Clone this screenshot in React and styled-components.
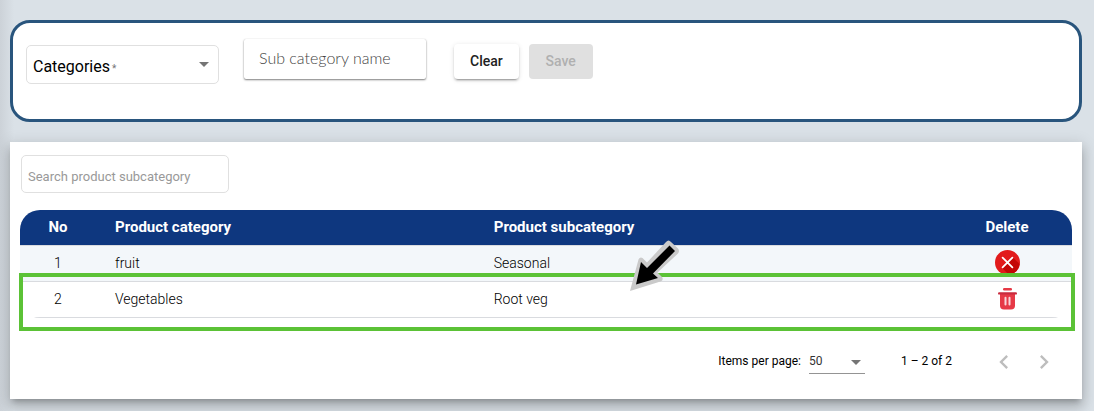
import React from "react";
import styled, { createGlobalStyle } from "styled-components";

const GlobalStyle = createGlobalStyle`
  *, *::before, *::after { box-sizing: border-box; }
  body {
    margin: 0;
    min-height: 100vh;
    background: linear-gradient(90deg, #ccd2d8, #dae1e7 14px) #dae1e7;
    font-family: Roboto, "Liberation Sans", sans-serif;
    color: #000;
  }
  button, input, select { font: inherit; }
`;

const Page = styled.main`
  display: flex;
  flex-direction: column;
  gap: 20px;
  padding: 20px 12px 12px 10px;
`;

const FormPanel = styled.form`
  display: flex;
  align-items: flex-start;
  padding: 16px 13px 35px;
  border: 3px solid #29557d;
  border-radius: 20px;
  background: #fff;
`;

const CategoryField = styled.div`
  display: grid;
  align-items: center;
  width: 193px;
  height: 39px;
  margin: 6px 25px 0 0;
  border: 1px solid #e0e0e0;
  border-radius: 5px;

  > * { grid-area: 1 / 1; }
`;

const CategoryLabel = styled.label`
  padding: 6px 0 0 6px;
  font-size: 16px;
  line-height: 20px;
  pointer-events: none;
  z-index: 1;

  small { margin-left: -2px; font-size: 10px; color: #757575; }
`;

const CategorySelect = styled.select`
  width: 100%;
  height: 100%;
  border: 0;
  background: transparent;
  appearance: none;
`;

const Arrow = styled.svg`
  width: 10px;
  height: 5px;
  margin-right: ${(p) => p.$inset};
  justify-self: end;
  fill: #757575;
  pointer-events: none;
`;

const NameInput = styled.input`
  width: 182px;
  height: 40px;
  padding: 0 15px 3px;
  border: 0;
  border-radius: 2px;
  background: #fff;
  box-shadow: 0 1px 2px rgba(0, 0, 0, 0.5), 0 0 1px rgba(0, 0, 0, 0.15);
  font-family: Lato, sans-serif;
  font-weight: 300;
  font-size: 16px;

  &::placeholder { color: #444; opacity: 1; }
`;

const Actions = styled.div`
  display: flex;
  gap: 10px;
  margin: 5px 0 0 28px;
`;

const Button = styled.button`
  min-width: 64px;
  height: 35px;
  padding: 0 16px 1px;
  border: 0;
  border-radius: 4px;
  background: #fff;
  color: #212121;
  font-size: 14px;
  font-weight: 500;
  box-shadow: 0 3px 1px -2px rgba(0, 0, 0, 0.2), 0 2px 2px rgba(0, 0, 0, 0.14),
    0 1px 5px rgba(0, 0, 0, 0.12);

  &:disabled {
    background: #e0e0e0;
    color: #b0b0b0;
    box-shadow: none;
  }
`;

const Card = styled.section`
  padding: 13px 10px 23px;
  background: #fff;
  box-shadow: 0 5px 5px -3px rgba(0, 0, 0, 0.2), 0 8px 10px 1px rgba(0, 0, 0, 0.14),
    0 3px 14px 2px rgba(0, 0, 0, 0.12);
`;

const SearchInput = styled.input`
  display: block;
  width: 208px;
  height: 38px;
  margin: 0 0 17px 1px;
  padding: 5px 6px 0;
  border: 1px solid #e0e0e0;
  border-radius: 5px;
  font-size: 13px;

  &::placeholder { color: #999; opacity: 1; }
`;

const TableArea = styled.div`
  position: relative;
`;

const TableClip = styled.div`
  overflow: hidden;
  border-radius: 20px;
`;

const Table = styled.table`
  width: 100%;
  table-layout: fixed;
  border-collapse: separate;
  border-spacing: 0;
`;

const HeadCell = styled.th`
  width: ${(p) => p.$width};
  height: 36px;
  padding: ${(p) => (p.$center ? "0 0 2px" : "0 0 2px 19px")};
  border-bottom: 1px solid #d9dbdf;
  background: #0e377f;
  color: #fff;
  font-size: 15px;
  font-weight: 700;
  line-height: 20px;
  text-align: ${(p) => (p.$center ? "center" : "left")};
`;

const Row = styled.tr`
  background: ${(p) => (p.$shaded ? "#f3f7fa" : "transparent")};
`;

const Cell = styled.td`
  height: 36px;
  padding: ${(p) => (p.$center ? "0 0 2px" : "0 0 2px 19px")};
  border-bottom: 1px solid #d9dbdf;
  font-weight: 300;
  font-size: 14px;
  line-height: 20px;
  text-align: ${(p) => (p.$center ? "center" : "left")};
`;

const IconButton = styled.button`
  display: inline-flex;
  padding: 0;
  border: 0;
  background: none;
  vertical-align: middle;
`;

const Highlight = styled.div`
  position: absolute;
  top: 63px;
  left: -1px;
  right: -3px;
  height: 58px;
  border: 4px solid #5bc236;
  pointer-events: none;
`;

const Pointer = styled.svg`
  position: absolute;
  top: 29px;
  left: 58%;
  width: 52px;
  height: 54px;
  margin-left: -1px;
  pointer-events: none;
`;

const Paginator = styled.nav`
  display: flex;
  align-items: center;
  justify-content: flex-end;
  margin-top: 28px;
  padding-right: 14px;
  font-size: 12px;
  line-height: 16px;
`;

const PageSize = styled.div`
  display: grid;
  align-items: center;
  width: 56px;
  height: 26px;
  margin: 0 36px 0 8px;
  border-bottom: 1px solid #949494;

  > * { grid-area: 1 / 1; }

  svg { margin-top: 4px; }

  select {
    width: 100%;
    padding: 0;
    border: 0;
    background: transparent;
    color: #333;
    appearance: none;
  }
`;

const PageButtons = styled.div`
  display: flex;
  gap: 12px;
  margin: 2px 0 0 38px;
`;

const DownArrow = ({ inset }) => (
  <Arrow viewBox="0 0 10 5" $inset={inset} aria-hidden="true">
    <path d="M0 0h10L5 5z" />
  </Arrow>
);

const CrossIcon = () => (
  <svg width="25" height="25" viewBox="0 0 25 25" aria-hidden="true">
    <circle cx="12.5" cy="12.5" r="12.5" fill="#e21b1b" />
    <path d="M18 7.5l6.6 6.6A12.5 12.5 0 0 1 14.2 24.9L7.2 18z" fill="#c40606" />
    <path d="M7.6 7.6l9.8 9.8M17.4 7.6l-9.8 9.8" stroke="#fff" strokeWidth="1.8" strokeLinecap="round" />
  </svg>
);

const TrashIcon = () => (
  <svg width="19" height="22" viewBox="0 0 19 22" aria-hidden="true">
    <rect x="5" y="0" width="9" height="2.4" rx="1.2" fill="#e63946" />
    <path d="M2 6h15v11.5a4 4 0 0 1-4 4H6a4 4 0 0 1-4-4z" fill="#e63946" />
    <rect x="0" y="4.2" width="19" height="2.4" rx="1.2" fill="#c92b3e" />
    <path d="M7.5 9.8v6.8M11.5 9.8v6.8" stroke="#f9d5d9" strokeWidth="2" strokeLinecap="round" />
  </svg>
);

const Chevron = ({ d }) => (
  <svg width="28" height="28" viewBox="0 0 24 24" fill="#bdbdbd" aria-hidden="true">
    <path d={d} />
  </svg>
);

const rows = [
  { no: 1, category: "fruit", subcategory: "Seasonal", Icon: CrossIcon },
  { no: 2, category: "Vegetables", subcategory: "Root veg", Icon: TrashIcon },
];

export default function App() {
  return (
    <>
      <GlobalStyle />
      <Page>
        <FormPanel onSubmit={(e) => e.preventDefault()}>
          <CategoryField>
            <CategoryLabel htmlFor="category">
              Categories <small>*</small>
            </CategoryLabel>
            <CategorySelect id="category" defaultValue="">
              <option value="" />
              <option value="fruit" />
              <option value="vegetables" />
            </CategorySelect>
            <DownArrow inset="9px" />
          </CategoryField>
          <NameInput aria-label="Sub category name" placeholder="Sub category name" />
          <Actions>
            <Button type="reset">Clear</Button>
            <Button type="submit" disabled>Save</Button>
          </Actions>
        </FormPanel>
        <Card>
          <SearchInput aria-label="Search product subcategory" placeholder="Search product subcategory" />
          <TableArea>
            <TableClip>
              <Table>
                <thead>
                  <tr>
                    <HeadCell $width="76px" $center>No</HeadCell>
                    <HeadCell $width="36%">Product category</HeadCell>
                    <HeadCell>Product subcategory</HeadCell>
                    <HeadCell $width="130px" $center>Delete</HeadCell>
                  </tr>
                </thead>
                <tbody>
                  {rows.map(({ no, category, subcategory, Icon }) => (
                    <Row key={no} $shaded={no % 2 === 1}>
                      <Cell $center>{no}</Cell>
                      <Cell>{category}</Cell>
                      <Cell>{subcategory}</Cell>
                      <Cell $center>
                        <IconButton type="button" aria-label={`Delete ${subcategory}`}>
                          <Icon />
                        </IconButton>
                      </Cell>
                    </Row>
                  ))}
                </tbody>
              </Table>
            </TableClip>
            <Highlight />
            <Pointer viewBox="0 0 52 54" aria-hidden="true">
              <path
                d="M1 52L9.500 20.500q1.500-3 4-1.500l4.500 4.500L37 3q2.500-3 5 0l7 6.500q2 2.500 0 5L28.500 33.500l4.500 4.500q2 3-1.500 4.500z"
                fill="#cacaca"
              />
              <path d="M7 45.500L12 23l6 6L40.500 6.500l5.500 5.500L24 34.500l5 4.500z" fill="#000" />
            </Pointer>
          </TableArea>
          <Paginator aria-label="Pagination">
            <label htmlFor="page-size">Items per page:</label>
            <PageSize>
              <select id="page-size" defaultValue="50">
                <option>50</option>
              </select>
              <DownArrow inset="4px" />
            </PageSize>
            <span>1 – 2 of 2</span>
            <PageButtons>
              <IconButton type="button" aria-label="Previous page" disabled>
                <Chevron d="M15.410 7.410L14 6l-6 6 6 6 1.410-1.410L10.830 12z" />
              </IconButton>
              <IconButton type="button" aria-label="Next page" disabled>
                <Chevron d="M10 6L8.590 7.410 13.170 12l-4.580 4.590L10 18l6-6z" />
              </IconButton>
            </PageButtons>
          </Paginator>
        </Card>
      </Page>
    </>
  );
}
